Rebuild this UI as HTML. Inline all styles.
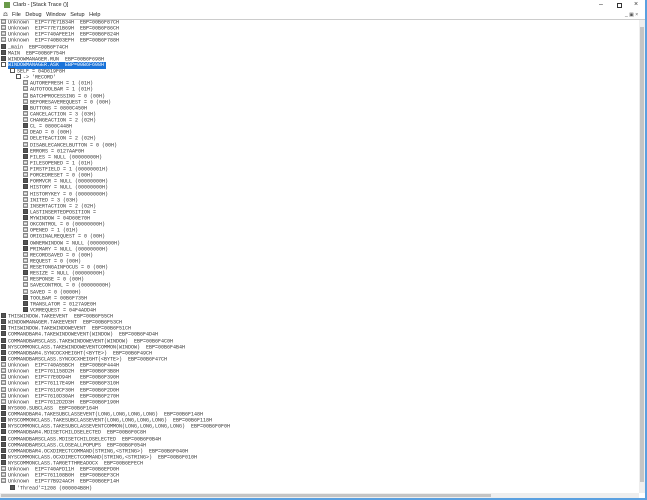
<!DOCTYPE html>
<html><head><style>
*{margin:0;padding:0;box-sizing:border-box}
body{width:647px;height:500px;background:#fff;position:relative;overflow:hidden;font-family:"Liberation Mono",monospace;font-size:5px;color:#333}
.t{position:absolute;font-family:"Liberation Sans",sans-serif;font-size:5.5px;color:#222;white-space:nowrap}
#tree{position:absolute;left:1px;top:19px;width:638px}
.r{height:6.13px;line-height:6.13px;white-space:pre;position:relative}
.i{display:inline-block;width:5px;height:5px;vertical-align:-0.5px;margin-right:2px;border:1px solid #888;background:linear-gradient(#bbb 0 1px,#eee 1px 2px,#bbb 2px 3px,#eee 3px)}
.p{background:#555;border-color:#444}
.m{background:#fff;border-color:#555}
.sel{background:#1a73d9;color:#fff;display:inline-block;padding-right:2px}
</style></head><body>
<div class="t" style="left:4px;top:2px;width:6px;height:6px;background:#6a9a4a"></div>
<div class="t" style="left:13px;top:2px">Clarb - [Stack Trace ()]</div>
<div class="t" style="left:3px;top:12px">&#x2696;</div>
<div class="t" style="left:12px;top:12px;word-spacing:3px">File Debug Window Setup Help</div>
<div class="t" style="left:599px;top:1px;font-size:7px;color:#333">&#8211;</div>
<div style="position:absolute;left:617px;top:3px;width:5px;height:5px;border:1px solid #333"></div>
<div class="t" style="left:634px;top:1px;font-size:7px;color:#333">&#215;</div>
<div class="t" style="left:625px;top:12px;font-size:5px;color:#555">_ &#9635; &#215;</div>
<div style="position:absolute;left:0;top:19px;width:646px;height:1px;background:#ccc"></div>
<div style="position:absolute;left:639px;top:20px;width:6px;height:473px;background:#eee"></div>
<div style="position:absolute;left:640px;top:27px;width:4px;height:455px;background:#c4c4c4"></div>
<div style="position:absolute;left:0;top:493px;width:639px;height:5px;background:#eee"></div>
<div style="position:absolute;left:1px;top:494px;width:490px;height:3px;background:#c4c4c4"></div>
<div style="position:absolute;left:645px;top:0;width:2px;height:500px;background:#5aa0e0"></div>
<div style="position:absolute;left:0;top:498px;width:647px;height:2px;background:#5aa0e0"></div>
<div id="tree">
<div class="r"><span class="i"></span>Unknown  EIP=77E71B34H  EBP=00B6F87CH</div>
<div class="r"><span class="i"></span>Unknown  EIP=77E71B69H  EBP=00B6F86CH</div>
<div class="r"><span class="i"></span>Unknown  EIP=740AFEE1H  EBP=00B6F824H</div>
<div class="r"><span class="i"></span>Unknown  EIP=740B03EFH  EBP=00B6F788H</div>
<div class="r"><span class="i p"></span>_main  EBP=00B6F74CH</div>
<div class="r"><span class="i p"></span>MAIN  EBP=00B6F754H</div>
<div class="r"><span class="i p"></span>WINDOWMANAGER.RUN  EBP=00B6F698H</div>
<div class="r"><span class="i m"></span><span class="sel">WINDOWMANAGER.ASK  EBP=00B6F608H</span></div>
<div class="r" style="padding-left:9px"><span class="i m"></span>SELF = 04D619F8H</div>
<div class="r" style="padding-left:15px"><span class="i m"></span>-&gt; 'RECORD'</div>
<div class="r" style="padding-left:22px"><span class="i"></span>AUTOREFRESH = 1 (01H)</div>
<div class="r" style="padding-left:22px"><span class="i"></span>AUTOTOOLBAR = 1 (01H)</div>
<div class="r" style="padding-left:22px"><span class="i"></span>BATCHPROCESSING = 0 (00H)</div>
<div class="r" style="padding-left:22px"><span class="i"></span>BEFORESAVEREQUEST = 0 (00H)</div>
<div class="r" style="padding-left:22px"><span class="i p"></span>BUTTONS = 0800C450H</div>
<div class="r" style="padding-left:22px"><span class="i"></span>CANCELACTION = 3 (03H)</div>
<div class="r" style="padding-left:22px"><span class="i"></span>CHANGEACTION = 2 (02H)</div>
<div class="r" style="padding-left:22px"><span class="i p"></span>CL = 0800C448H</div>
<div class="r" style="padding-left:22px"><span class="i"></span>DEAD = 0 (00H)</div>
<div class="r" style="padding-left:22px"><span class="i"></span>DELETEACTION = 2 (02H)</div>
<div class="r" style="padding-left:22px"><span class="i"></span>DISABLECANCELBUTTON = 0 (00H)</div>
<div class="r" style="padding-left:22px"><span class="i p"></span>ERRORS = 0127AAF0H</div>
<div class="r" style="padding-left:22px"><span class="i p"></span>FILES = NULL (00000000H)</div>
<div class="r" style="padding-left:22px"><span class="i"></span>FILESOPENED = 1 (01H)</div>
<div class="r" style="padding-left:22px"><span class="i"></span>FIRSTFIELD = 1 (00000001H)</div>
<div class="r" style="padding-left:22px"><span class="i"></span>FORCEDRESET = 0 (00H)</div>
<div class="r" style="padding-left:22px"><span class="i p"></span>FORMVCR = NULL (00000000H)</div>
<div class="r" style="padding-left:22px"><span class="i p"></span>HISTORY = NULL (00000000H)</div>
<div class="r" style="padding-left:22px"><span class="i"></span>HISTORYKEY = 0 (00000000H)</div>
<div class="r" style="padding-left:22px"><span class="i"></span>INITED = 3 (03H)</div>
<div class="r" style="padding-left:22px"><span class="i"></span>INSERTACTION = 2 (02H)</div>
<div class="r" style="padding-left:22px"><span class="i p"></span>LASTINSERTEDPOSITION =</div>
<div class="r" style="padding-left:22px"><span class="i p"></span>MYWINDOW = 04D60E70H</div>
<div class="r" style="padding-left:22px"><span class="i"></span>OKCONTROL = 0 (00000000H)</div>
<div class="r" style="padding-left:22px"><span class="i"></span>OPENED = 1 (01H)</div>
<div class="r" style="padding-left:22px"><span class="i"></span>ORIGINALREQUEST = 0 (00H)</div>
<div class="r" style="padding-left:22px"><span class="i p"></span>OWNERWINDOW = NULL (00000000H)</div>
<div class="r" style="padding-left:22px"><span class="i p"></span>PRIMARY = NULL (00000000H)</div>
<div class="r" style="padding-left:22px"><span class="i"></span>RECORDSAVED = 0 (00H)</div>
<div class="r" style="padding-left:22px"><span class="i"></span>REQUEST = 0 (00H)</div>
<div class="r" style="padding-left:22px"><span class="i"></span>RESETONGAINFOCUS = 0 (00H)</div>
<div class="r" style="padding-left:22px"><span class="i p"></span>RESIZE = NULL (00000000H)</div>
<div class="r" style="padding-left:22px"><span class="i"></span>RESPONSE = 0 (00H)</div>
<div class="r" style="padding-left:22px"><span class="i"></span>SAVECONTROL = 0 (00000000H)</div>
<div class="r" style="padding-left:22px"><span class="i"></span>SAVED = 0 (0000H)</div>
<div class="r" style="padding-left:22px"><span class="i p"></span>TOOLBAR = 00B6F735H</div>
<div class="r" style="padding-left:22px"><span class="i p"></span>TRANSLATOR = 0127A9E0H</div>
<div class="r" style="padding-left:22px"><span class="i p"></span>VCRREQUEST = 04F4ADD4H</div>
<div class="r"><span class="i p"></span>THISWINDOW.TAKEEVENT  EBP=00B6F55CH</div>
<div class="r"><span class="i p"></span>WINDOWMANAGER.TAKEEVENT  EBP=00B6F53CH</div>
<div class="r"><span class="i p"></span>THISWINDOW.TAKEWINDOWEVENT  EBP=00B6F51CH</div>
<div class="r"><span class="i p"></span>COMMANDBAR4.TAKEWINDOWEVENT(WINDOW)  EBP=00B6F4D4H</div>
<div class="r"><span class="i p"></span>COMMANDBARSCLASS.TAKEWINDOWEVENT(WINDOW)  EBP=00B6F4C0H</div>
<div class="r"><span class="i p"></span>NYSCOMMONCLASS.TAKEWINDOWEVENTCOMMON(WINDOW)  EBP=00B6F4B4H</div>
<div class="r"><span class="i p"></span>COMMANDBAR4.SYNCOCXHEIGHT(&lt;BYTE&gt;)  EBP=00B6F49CH</div>
<div class="r"><span class="i p"></span>COMMANDBARSCLASS.SYNCOCXHEIGHT(&lt;BYTE&gt;)  EBP=00B6F47CH</div>
<div class="r"><span class="i"></span>Unknown  EIP=740A55BCH  EBP=00B6F444H</div>
<div class="r"><span class="i"></span>Unknown  EIP=761158D2H  EBP=00B6F3B8H</div>
<div class="r"><span class="i"></span>Unknown  EIP=77E0D94H   EBP=00B6F390H</div>
<div class="r"><span class="i"></span>Unknown  EIP=76117E49H  EBP=00B6F310H</div>
<div class="r"><span class="i"></span>Unknown  EIP=7610CF30H  EBP=00B6F2D0H</div>
<div class="r"><span class="i"></span>Unknown  EIP=7610D30AH  EBP=00B6F270H</div>
<div class="r"><span class="i"></span>Unknown  EIP=7612D2D3H  EBP=00B6F190H</div>
<div class="r"><span class="i p"></span>NYS000.SUBCLASS  EBP=00B6F164H</div>
<div class="r"><span class="i p"></span>COMMANDBAR4.TAKESUBCLASSEVENT(LONG,LONG,LONG,LONG)  EBP=00B6F148H</div>
<div class="r"><span class="i p"></span>NYSCOMMONCLASS.TAKESUBCLASSEVENT(LONG,LONG,LONG,LONG)  EBP=00B6F118H</div>
<div class="r"><span class="i p"></span>NYSCOMMONCLASS.TAKESUBCLASSEVENTCOMMON(LONG,LONG,LONG,LONG)  EBP=00B6F0F0H</div>
<div class="r"><span class="i p"></span>COMMANDBAR4.MDISETCHILDSELECTED  EBP=00B6F0C8H</div>
<div class="r"><span class="i p"></span>COMMANDBARSCLASS.MDISETCHILDSELECTED  EBP=00B6F0B4H</div>
<div class="r"><span class="i p"></span>COMMANDBARSCLASS.CLOSEALLPOPUPS  EBP=00B6F054H</div>
<div class="r"><span class="i p"></span>COMMANDBAR4.OCXDIRECTCOMMAND(STRING,&lt;STRING&gt;)  EBP=00B6F040H</div>
<div class="r"><span class="i p"></span>NYSCOMMONCLASS.OCXDIRECTCOMMAND(STRING,&lt;STRING&gt;)  EBP=00B6F010H</div>
<div class="r"><span class="i p"></span>NYSCOMMONCLASS.TARGETTHREADOCX  EBP=00B6EFECH</div>
<div class="r"><span class="i"></span>Unknown  EIP=740AFD11H  EBP=00B6EFD0H</div>
<div class="r"><span class="i"></span>Unknown  EIP=761108B0H  EBP=00B6EF3CH</div>
<div class="r"><span class="i"></span>Unknown  EIP=77B924ACH  EBP=00B6EF14H</div>
<div class="r" style="padding-left:9px"><span class="i p"></span>'Thread'=1208 (000004B8H)</div>
</div>
</body></html>
